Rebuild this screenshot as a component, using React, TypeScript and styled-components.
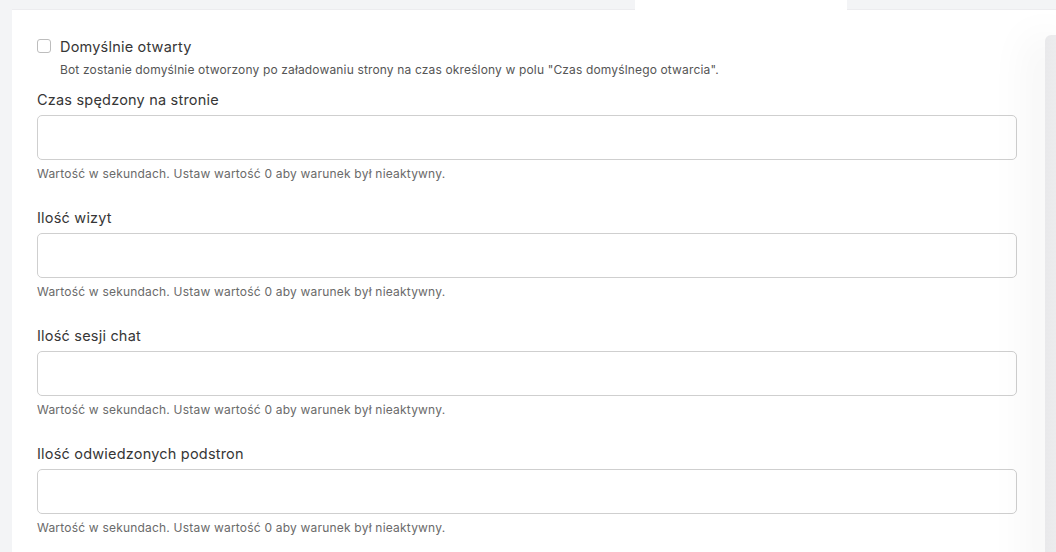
import React from 'react';
import styled, { createGlobalStyle } from 'styled-components';

const GlobalStyle = createGlobalStyle`
  html, body {
    margin: 0;
    padding: 0;
    background: #f3f4f6;
    font-family: Inter, "Noto Sans", sans-serif;
    overflow: hidden;
  }
  * { box-sizing: border-box; }
`;

const Page = styled.div`
  width: 1056px;
  height: 552px;
  padding-left: 12px;
  display: flex;
  flex-direction: column;
  position: relative;
  overflow: hidden;
`;

const TabBar = styled.div`
  height: 10px;
  display: flex;
`;

const Tab = styled.div<{ $active?: boolean; $width: number }>`
  width: ${p => p.$width}px;
  background: ${p => (p.$active ? '#ffffff' : '#f3f4f6')};
  border-bottom: ${p => (p.$active ? 'none' : '1px solid #ececef')};
`;

const Card = styled.div`
  flex: 1;
  background: #ffffff;
  padding: 28px 39px 0 25px;
  display: flex;
  flex-direction: column;
`;

const CheckRow = styled.label`
  display: flex;
  align-items: center;
  gap: 9px;
  height: 16px;
  font-size: 14.5px;
  letter-spacing: 0.2px;
  color: #363636;
`;

const Box = styled.span`
  width: 14px;
  height: 14px;
  border: 1px solid #bdbdbd;
  border-radius: 3px;
  background: #fff;
`;

const CheckHelp = styled.p`
  margin: 8px 0 0 23px;
  font-size: 12px;
  letter-spacing: 0.15px;
  line-height: 16px;
  color: #555555;
`;

const Field = styled.div<{ $first?: boolean }>`
  display: flex;
  flex-direction: column;
  margin-top: ${p => (p.$first ? '12px' : '26px')};
`;

const Label = styled.div`
  font-size: 14.5px;
  letter-spacing: 0.2px;
  line-height: 20px;
  color: #363636;
`;

const Input = styled.input`
  margin-top: 5px;
  width: 980px;
  height: 45px;
  border: 1px solid #cfcfcf;
  border-radius: 5px;
  background: #fff;
  outline: none;
  font-family: inherit;
  font-size: 14px;
  padding: 0 12px;
`;

const Help = styled.div`
  margin-top: 6px;
  font-size: 12px;
  letter-spacing: 0.2px;
  line-height: 16px;
  color: #6a6a6a;
`;

const SidePanel = styled.div`
  position: absolute;
  left: 1045px;
  top: 35px;
  width: 40px;
  height: 560px;
  border-radius: 6px 0 0 0;
  background: linear-gradient(to right, #e9e9eb, #f3f3f5);
  box-shadow: -20px 0 40px rgba(0, 0, 0, 0.04);
`;

const fields = [
  'Czas spędzony na stronie',
  'Ilość wizyt',
  'Ilość sesji chat',
  'Ilość odwiedzonych podstron',
];

const App: React.FC = () => {
  return (
    <>
      <GlobalStyle />
      <Page>
        <TabBar>
          <Tab $width={623} />
          <Tab $width={212} $active />
          <Tab $width={209} />
        </TabBar>
        <Card>
          <CheckRow>
            <Box />
            Domyślnie otwarty
          </CheckRow>
          <CheckHelp>
            Bot zostanie domyślnie otworzony po załadowaniu strony na czas określony w polu "Czas domyślnego otwarcia".
          </CheckHelp>
          {fields.map((name, i) => (
            <Field key={name} $first={i === 0}>
              <Label>{name}</Label>
              <Input type="text" />
              <Help>Wartość w sekundach. Ustaw wartość 0 aby warunek był nieaktywny.</Help>
            </Field>
          ))}
        </Card>
        <SidePanel />
      </Page>
    </>
  );
};

export default App;
